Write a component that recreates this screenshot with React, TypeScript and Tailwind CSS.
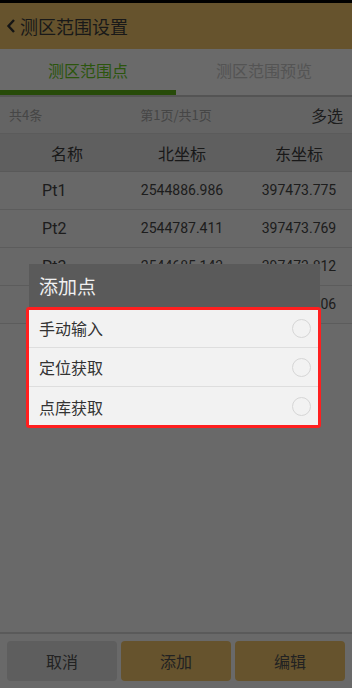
import React from "react";

const rows = [
  { name: "Pt1", n: "2544886.986", e: "397473.775" },
  { name: "Pt2", n: "2544787.411", e: "397473.769" },
  { name: "Pt3", n: "2544685.143", e: "397473.812" },
  { name: "Pt4", n: "2544600.520", e: "397473.806" },
];

const options = ["手动输入", "定位获取", "点库获取"];

export default function App() {
  return (
    <div
      className="relative w-[352px] h-[688px] overflow-hidden bg-[#d2d2d2] flex flex-col"
      style={{ fontFamily: '"Noto Sans CJK SC", "Noto Sans", Roboto, sans-serif' }}
    >
      <div className="h-[3px] bg-black" />
      {/* header */}
      <div className="h-[46px] bg-[#cca75a] flex items-center pl-[6px] gap-[4px]">
        <svg width="10" height="16" viewBox="0 0 10 16" fill="none">
          <path d="M8 2 L2.5 8 L8 14" stroke="#2a2a2a" strokeWidth="2.4" />
        </svg>
        <span className="text-[18px] text-[#333]">测区范围设置</span>
      </div>

      {/* tabs */}
      <div className="h-[48px] grid grid-cols-2 border-b-[2px] border-[#a8a8a8] bg-[#d4d4d4]">
        <div className="flex flex-col">
          <div className="flex-1 flex items-center justify-center text-[16px] text-[#56ab1a]">测区范围点</div>
          <div className="h-[5px] bg-[#4f9612]" />
        </div>
        <div className="flex items-center justify-center text-[16px] text-[#a8a8a8] pb-[5px]">测区范围预览</div>
      </div>

      {/* info row */}
      <div className="h-[37px] bg-[#c8c8c8] flex items-center justify-between px-[9px] border-b border-[#b6b6b6]">
        <span className="text-[13px] text-[#8c8c8c] w-[60px]">共4条</span>
        <span className="text-[13px] text-[#8c8c8c]">第1页/共1页</span>
        <span className="text-[16px] text-[#3a3a3a] w-[60px] text-right">多选</span>
      </div>

      {/* table header */}
      <div className="h-[38px] grid grid-cols-[118px_128px_106px] items-center bg-[#bebebe] border-b border-[#b2b2b2] text-[16px] text-[#333]">
        <span className="text-center pl-[16px]">名称</span>
        <span className="text-center">北坐标</span>
        <span className="text-center">东坐标</span>
      </div>
      {rows.map((r) => (
        <div
          key={r.name}
          className="h-[38px] grid grid-cols-[118px_128px_106px] items-center bg-[#d0d0d0] border-b border-[#b8b8b8] text-[#3a3a3a]"
        >
          <span className="pl-[42px] text-[16px]" style={{ fontFamily: "Roboto, sans-serif" }}>{r.name}</span>
          <span className="text-center text-[14px]" style={{ fontFamily: "Roboto, sans-serif" }}>{r.n}</span>
          <span className="text-center text-[14px]" style={{ fontFamily: "Roboto, sans-serif" }}>{r.e}</span>
        </div>
      ))}

      <div className="flex-1" />

      {/* bottom bar */}
      <div className="border-t-[2px] border-[#b4b4b4] px-[7px] pt-[7px] pb-[7px] grid grid-cols-3 gap-[4px]">
        <div className="h-[40px] rounded-[4px] bg-[#bcbcbc] flex items-center justify-center text-[16px] text-[#444]">取消</div>
        <div className="h-[40px] rounded-[4px] bg-[#cca75a] flex items-center justify-center text-[16px] text-[#444]">添加</div>
        <div className="h-[40px] rounded-[4px] bg-[#cca75a] flex items-center justify-center text-[16px] text-[#444]">编辑</div>
      </div>

      {/* dim overlay */}
      <div className="absolute inset-0 bg-black/50" />

      {/* dialog */}
      <div className="absolute left-[29px] top-[264px] w-[291px]">
        <div className="h-[45px] bg-[#5a5a5a] flex items-center pl-[10px] text-[19px] text-[#f0f0f0]">添加点</div>
        <div className="relative bg-[#f2f2f2]">
          {options.map((o, i) => (
            <div
              key={o}
              className={`h-[39px] flex items-center justify-between pl-[10px] pr-[9px] ${i < options.length - 1 ? "border-b border-[#dedede]" : ""}`}
            >
              <span className="text-[16px] text-[#333]">{o}</span>
              <span className="w-[19px] h-[19px] rounded-full border-[1.5px] border-[#d6d6d6]" />
            </div>
          ))}
          <div className="absolute -left-[3px] -top-[2px] -bottom-[2px] -right-[1px] border-[3px] border-[#ff1f1f] rounded-[3px]" />
        </div>
      </div>
    </div>
  );
}
